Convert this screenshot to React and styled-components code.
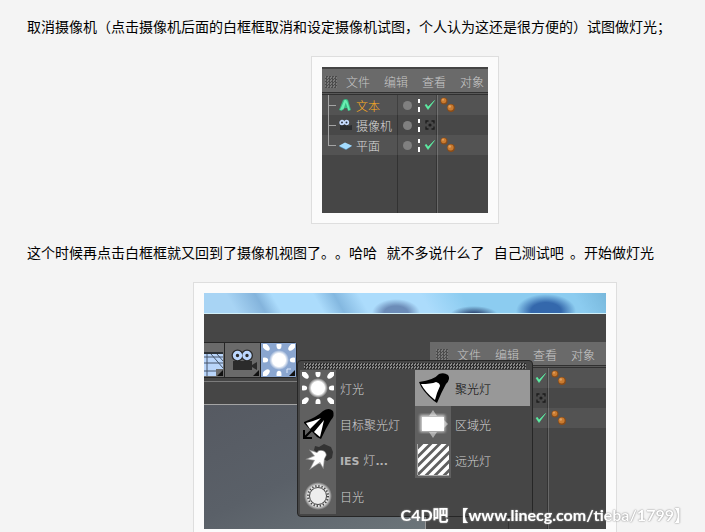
import React, { useId, useState } from "react";
import styled, { createGlobalStyle } from "styled-components";

const GlobalStyle = createGlobalStyle`
  html {
    scrollbar-width: none;
  }

  body {
    margin: 0;
    background: #f4f4f4;
    color: #000;
    font-family: "Noto Sans CJK SC", sans-serif;
    font-size: 14px;
    text-spacing-trim: space-all;
  }

  *, *::before, *::after {
    box-sizing: border-box;
  }

  button {
    margin: 0;
    padding: 0;
    border: 0;
    background: none;
    color: inherit;
    font: inherit;
  }

  svg {
    display: block;
    flex: none;
  }
`;

const Article = styled.article`
  display: flex;
  flex-direction: column;
  gap: 17px;
  padding: 15px 0 0 27px;
`;

const Paragraph = styled.p`
  margin: 0;
  padding-bottom: 2px;
  line-height: 22px;
`;

const Figure = styled.figure`
  display: flex;
  justify-content: center;
  margin: 0;
  padding-left: 78px;
`;

const Frame = styled.div`
  padding: 10px;
  border: 1px solid #dedede;
  background: #fbfbfb;
`;

const Screen = styled.div`
  position: relative;
  display: flex;
  flex-direction: column;
  width: ${(props) => props.$width}px;
  max-width: 100%;
  height: ${(props) => props.$height}px;
  overflow: hidden;
  background: #464646;
  color: #c8c8c8;
  font-size: 12px;
  font-weight: 300;
  line-height: 16px;
`;

/* Object manager */

const Manager = styled.section`
  position: relative;
  display: flex;
  flex: 1;
  flex-direction: column;
  min-width: 0;
  background: linear-gradient(
    90deg,
    transparent ${(props) => props.$nameWidth}px,
    #323232 ${(props) => props.$nameWidth}px,
    #323232 ${(props) => props.$nameWidth + 1}px,
    transparent ${(props) => props.$nameWidth + 1}px,
    transparent ${(props) => props.$nameWidth + 39}px,
    #343434 ${(props) => props.$nameWidth + 39}px,
    #343434 ${(props) => props.$nameWidth + 40}px,
    #686868 ${(props) => props.$nameWidth + 40}px,
    #686868 ${(props) => props.$nameWidth + 41}px,
    transparent ${(props) => props.$nameWidth + 41}px
  );
`;

const MenuBar = styled.nav`
  display: flex;
  flex: none;
  align-items: center;
  gap: 14px;
  height: 26px;
  padding: 3px 0 2px ${(props) => props.$inset}px;
  border-bottom: 1px solid #303030;
  background: linear-gradient(#6a6a6a 23px, #303030 23px, #303030 24px, #585858 24px);
  white-space: nowrap;
`;

const Grip = styled.span`
  flex: none;
  width: 12px;
  height: 12px;
  margin-right: -5px;
  background: repeating-conic-gradient(#4c4c4c 0 25%, #7a7a7a 0 50%) 0 0 / 3px 3px;
`;

const MenuButton = styled.button`
  flex: none;
`;

const ObjectList = styled.ul`
  margin: 0;
  padding: 0;
  list-style: none;
`;

const ObjectRow = styled.li`
  display: flex;
  height: 20px;
  background: ${(props) =>
    props.$shaded ? "rgba(255, 255, 255, 0.07)" : "rgba(255, 255, 255, 0.01)"};
`;

const NameCell = styled.div`
  display: flex;
  flex: none;
  align-items: center;
  width: ${(props) => props.$width}px;
  padding-left: ${(props) => props.$inset}px;
`;

const ObjectName = styled.span`
  padding: 2px 0 0 4px;
  color: ${(props) => (props.$selected ? "#ffae20" : "#dcdcdc")};
  white-space: nowrap;
`;

const StateCell = styled.div`
  display: flex;
  flex: none;
  align-items: center;
  width: 41px;
  padding-left: 5px;
`;

const Dot = styled.span`
  width: 9px;
  height: 9px;
  border-radius: 50%;
  background: #808080;
`;

const Dashes = styled.span`
  width: 2px;
  height: 13px;
  margin: 0 4px 0 6px;
  background: linear-gradient(#fff 4px, transparent 4px, transparent 8px, #fff 8px);
`;

const Toggle = styled.label`
  display: block;
  width: 12px;
  height: 12px;
`;

const HiddenCheck = styled.input`
  position: absolute;
  width: 12px;
  height: 12px;
  margin: 0;
  opacity: 0;
`;

/* Main window */

const TopEdge = styled.div`
  display: flex;
  flex: 1;
  border-top: 2px solid #444;
`;

const Sky = styled.div`
  flex: none;
  height: 21px;
  border-bottom: 1px solid #d2f0f8;
  background:
    radial-gradient(ellipse 24px 14px at 192px 20px, #6c8cb8 50%, transparent),
    radial-gradient(ellipse 24px 9px at 270px 22px, #34507c 25%, transparent),
    radial-gradient(ellipse 30px 17px at 342px 18px, #3468ac 50%, transparent),
    linear-gradient(
      60deg,
      #a8d4f4 0 8%,
      #84b4dc 15%,
      #acdcfc 19% 29%,
      #84b8e0 34%,
      #acdcfc 40% 55%,
      #8cccf0 65% 92%,
      #78b8dc
    );
`;

const Workspace = styled.div`
  display: flex;
  flex: 1;
  padding-top: 28px;
`;

const Stage = styled.div`
  display: flex;
  flex: none;
  flex-direction: column;
  width: 226px;
`;

const Toolbar = styled.div`
  display: flex;
  gap: 1px;
  width: 93px;
  height: 36px;
  padding: 1px 1px 1px 0;
  border-radius: 0 4px 4px 0;
  background: #262626;
`;

const ToolButton = styled.button`
  width: ${(props) => props.$width}px;
  height: 34px;
  overflow: hidden;
  background: ${(props) => (props.$active ? "#8aa6d0" : "#6a6a6a")};
`;

const SubBar = styled.div`
  height: 23px;
  margin-top: 3px;
  border-top: 1px solid #7c7c7c;
`;

const Viewport = styled.div`
  flex: 1;
  margin-right: 4px;
  border-top: 1px solid #a4a4a4;
  border-right: 1px solid #9a9a9a;
  background: linear-gradient(155deg, #565a62 0%, #5a6068 50%, #6c757a 100%);
`;

const Popup = styled.div`
  position: absolute;
  top: 67px;
  left: 93px;
  width: 236px;
  padding: 2px;
  border: 1px solid #262626;
  border-radius: 4px;
  background: #464646;
`;

const TearOff = styled.div`
  height: 6px;
  margin: 0 4px 1px;
  background: repeating-conic-gradient(#2c2c2c 0 25%, #888 0 50%) 0 0 / 3px 3px;
`;

const LightGrid = styled.div`
  display: grid;
  grid-template-rows: repeat(4, 36px);
  grid-auto-columns: 1fr;
  grid-auto-flow: column;
`;

const LightButton = styled.button`
  display: flex;
  align-items: center;
  gap: 4px;
  background: ${(props) => (props.$active ? "#989898" : "none")};
  color: ${(props) => (props.$active ? "#000" : "#d2d2d2")};
  text-align: left;
  white-space: nowrap;

  svg {
    background: ${(props) => (props.$active ? "#989898" : "#606060")};
  }
`;

const LightName = styled.span`
  padding-top: 2px;
`;

const Latin = styled.b`
  color: #b4b4b4;
  font-family: "DejaVu Sans", sans-serif;
  font-size: 11px;
  font-weight: 700;
`;

const Watermark = styled.span`
  position: fixed;
  right: 15px;
  bottom: 5px;
  color: #fff;
  font-family: Lato, "Noto Sans CJK SC", sans-serif;
  font-size: 16px;
  font-weight: 700;
  line-height: 24px;
  text-shadow: 0 0 1px #888, 0 0 2px #999;
  white-space: nowrap;
`;

const TextIcon = () => (
  <svg width="13" height="14" viewBox="0 0 13 14">
    <path d="M0 12 4 2q3-2 5 0l3 10-3 1-1-3-4 .5-1 2.500z" fill="#39b983" />
    <path d="M1 12 5.500 2h2l-3 9.500zM8 2.500l3 9.500-1.500.5L6.500 4z" fill="#69efb2" />
  </svg>
);

const CameraIcon = () => (
  <svg width="13" height="12" viewBox="0 0 13 12">
    <path d="M1 6h8v1l4-1v5H1z" fill="#2b2d30" />
    <g fill="#28303c" stroke="#c6dcff" strokeWidth="1.700">
      <circle cx="3" cy="3.500" r="1.800" />
      <circle cx="7.500" cy="3.500" r="1.800" />
    </g>
  </svg>
);

const PlaneIcon = () => (
  <svg width="13" height="12" viewBox="0 0 13 12">
    <path d="M0 7.500 6 4l7 3-6 4z" fill="#5b93bd" />
    <path d="M0 6.800 6 3.500l7 3.200-6 3.500z" fill="#a4dcff" />
  </svg>
);

const CheckIcon = () => (
  <svg width="12" height="12" viewBox="0 0 12 12">
    <path d="M1 6 2.500 5.500 4 8 10.500 1.500 4 10.500z" fill="#5cf0a4" stroke="#5cf0a4" strokeWidth=".6" />
  </svg>
);

const TargetIcon = () => (
  <svg width="12" height="12" viewBox="0 0 12 12">
    <path
      d="M2 4.500V2h2.500M7.500 2H10v2.500M10 7.500V10H7.500M4.500 10H2V7.500"
      fill="none"
      stroke="#1c1c1c"
      strokeWidth="1.300"
    />
    <circle cx="6" cy="6" r="1.600" fill="#1c1c1c" />
  </svg>
);

const TagIcon = () => (
  <svg width="16" height="20" viewBox="0 0 16 20">
    <g fill="#8a4c18">
      <circle cx="5" cy="6" r="3.500" />
      <circle cx="12" cy="13" r="3.900" />
    </g>
    <g fill="#c97b30">
      <circle cx="4.700" cy="5.600" r="2.600" />
      <circle cx="11.600" cy="12.500" r="3" />
    </g>
    <g fill="#e0a060">
      <circle cx="4" cy="4.800" r="1" />
      <circle cx="10.800" cy="11.500" r="1.200" />
    </g>
  </svg>
);

const OmniIcon = () => {
  const id = useId();
  return (
    <svg width="36" height="36" viewBox="0 0 36 36">
      <defs>
        <radialGradient id={id}>
          <stop offset="0.650" stopColor="#fff" />
          <stop offset="1" stopColor="#fff" stopOpacity="0" />
        </radialGradient>
        <clipPath id={`${id}c`}>
          <path d="M2 2h32v32H2z" />
        </clipPath>
      </defs>
      <circle cx="18" cy="18" r="10" fill={`url(#${id})`} />
      <g clipPath={`url(#${id}c)`} fill="#fff">
        {[0, 90, 180, 270].map((angle) => (
          <g key={angle} transform={`rotate(${angle} 18 18)`}>
            <ellipse cx="18" cy="3.500" rx="2.500" ry="3.700" />
            <ellipse cx="18" cy="-0.500" rx="2.600" ry="4.600" transform="rotate(45 18 18)" />
          </g>
        ))}
      </g>
    </svg>
  );
};

const SpotIcon = () => (
  <svg width="36" height="36" viewBox="0 0 36 36">
    <path
      d="M4 12Q19 10 24 4Q29 2 33 5Q36 9 31 14Q26 23 22 33L19 31Q7 21 4 12z"
      fill="#000"
    />
    <path d="M6 14Q16 14 21 12Q25 13 25 16Q22 22 20 30Q10 22 6 14z" fill="#fff" />
  </svg>
);

const TargetSpotIcon = () => (
  <svg width="36" height="36" viewBox="0 0 36 36">
    <path
      d="M4 16Q17 11 23 5Q29 1 33 5Q35 10 31 14Q26 22 21 33L17 31 4 17z"
      fill="#000"
    />
    <path d="M6 17Q14 15 21 12L10 23zM24 14Q22 23 20 31L14 26z" fill="#fff" />
    <path d="M23 13 5 31M4 24v8h8" fill="none" stroke="#000" strokeWidth="2" />
  </svg>
);

const IesIcon = () => (
  <svg width="36" height="36" viewBox="0 0 36 36">
    <path d="M14 8 15 4l4 1 5-3 7 3 2 5-1 6-5 3-7-4z" fill="#333" />
    <path
      d="M19 9q6-1 7 4l-2 4-1 8-3-5-9 6 4-8-7-1 7-3-4-5 6 2z"
      fill="#fff"
      stroke="#fff"
      strokeOpacity="0.400"
      strokeWidth="1.500"
    />
  </svg>
);

const SunIcon = () => {
  const id = useId();
  return (
    <svg width="36" height="36" viewBox="0 0 36 36">
      <radialGradient id={id}>
        <stop offset="0.750" stopColor="#e4e4e4" />
        <stop offset="1" stopColor="#e4e4e4" stopOpacity="0" />
      </radialGradient>
      <circle cx="18" cy="18" r="14" fill={`url(#${id})`} />
      <circle
        cx="18"
        cy="18"
        r="10"
        fill="none"
        stroke="#444"
        strokeWidth="2"
        strokeDasharray="1.300 1.844"
      />
      <circle cx="18" cy="18" r="8.500" fill="#ededed" stroke="#444" />
    </svg>
  );
};

const AreaIcon = () => {
  const id = useId();
  return (
    <svg width="36" height="36" viewBox="0 0 36 36">
      <filter id={id}>
        <feGaussianBlur stdDeviation="1.500" />
      </filter>
      <path d="m18 4 4 6h-8zM18 32l-4-6h8zM33 18l-4-4v8z" fill="#aaa" />
      <path d="M5 9h25v17H5z" fill="#fff" filter={`url(#${id})`} opacity="0.700" />
      <path d="M7 11h22v14H7z" fill="#fff" />
    </svg>
  );
};

const InfiniteIcon = () => {
  const id = useId();
  return (
    <svg width="36" height="36" viewBox="0 0 36 36">
      <clipPath id={id}>
        <path d="M3 2h31v31H3z" />
      </clipPath>
      <path
        clipPath={`url(#${id})`}
        d="M-2 15 15-2M-2 24 24-2M-2 33 33-2M2 38 38 2M11 38 38 11M20 38 38 20M29 38 38 29"
        stroke="#fff"
        strokeWidth="3.600"
      />
      <path d="M2.500 2v31M3 33.500h31" stroke="#aaa" />
    </svg>
  );
};

const Corner = ({ x }) => <path d={`M${x} 27v6h-6z`} fill="#111" />;

const FloorTool = () => (
  <svg width="20" height="34" viewBox="0 0 20 34">
    <path d="M0 9h19v24H0z" fill="#b9d5fa" />
    <path d="M0 9h19v2H0z" fill="#2b3035" />
    <path
      d="M0 14h19M0 20h19M0 28h13M3 11v22M7 11l12 14M13 11l6 7"
      fill="none"
      stroke="#46556a"
    />
    <path d="M12 26h7v7h-7z" fill="#6a6a6a" />
    <Corner x={19} />
  </svg>
);

const CameraTool = () => (
  <svg width="35" height="34" viewBox="0 0 35 34">
    <path d="M8 18h19v4l5-3v8l-5-3v3H8z" fill="#2b2b2b" />
    <g fill="#2b2b2b" stroke="#2b2b2b" strokeWidth="6">
      <circle cx="12.500" cy="12.500" r="3" />
      <circle cx="22" cy="12.500" r="3" />
    </g>
    <g fill="#2b2b2b" stroke="#bcd8ff" strokeWidth="3">
      <circle cx="12.500" cy="12.500" r="3.200" />
      <circle cx="22" cy="12.500" r="3.200" />
    </g>
    <Corner x={34} />
  </svg>
);

const LightTool = () => (
  <svg width="35" height="34" viewBox="0 1 35 34">
    <OmniIcon />
    <path d="M25 26h9v8h-9z" fill="#8aa6d0" />
    <path d="M26 31v-4h4" fill="none" stroke="#dce8fa" />
    <path d="M34 28v6h-6z" fill="#111" />
  </svg>
);

const objects = [
  { name: "文本", icon: TextIcon, selected: true, enabled: true },
  { name: "摄像机", icon: CameraIcon, camera: true },
  { name: "平面", icon: PlaneIcon, enabled: true },
];

const lights = [
  { name: "灯光", icon: OmniIcon },
  { name: "目标聚光灯", icon: TargetSpotIcon },
  { name: "灯", prefix: "IES ", suffix: "...", icon: IesIcon },
  { name: "日光", icon: SunIcon },
  { name: "聚光灯", icon: SpotIcon },
  { name: "区域光", icon: AreaIcon },
  { name: "远光灯", icon: InfiniteIcon },
];

const Branch = ({ last }) => (
  <svg width="11" height="20" viewBox="0 0 11 20">
    <path d={`M.5 0v${last ? 10.5 : 20}M0 10.500h8`} fill="none" stroke="#a4a4a4" />
  </svg>
);

// covered: the name column is under an open menu, so it stays empty
const ObjectManager = ({ inset = 0, covered = false }) => {
  const [items, setItems] = useState(objects);

  const handleToggle = (name) => {
    setItems(
      items.map((item) =>
        item.name === name ? { ...item, enabled: !item.enabled } : item
      )
    );
  };

  return (
    <Manager $nameWidth={75 + inset}>
      <MenuBar $inset={3 + inset}>
        <Grip />
        {["文件", "编辑", "查看", "对象"].map((label) => (
          <MenuButton key={label} type="button">
            {label}
          </MenuButton>
        ))}
      </MenuBar>
      <ObjectList>
        {items.map((item, index) => (
          <ObjectRow key={item.name} $shaded={index % 2 === 0}>
            <NameCell $width={76 + inset} $inset={6 + inset}>
              {!covered && (
                <>
                  <Branch last={index === items.length - 1} />
                  <item.icon />
                  <ObjectName $selected={item.selected}>{item.name}</ObjectName>
                </>
              )}
            </NameCell>
            <StateCell>
              <Dot />
              <Dashes />
              <Toggle>
                <HiddenCheck
                  type="checkbox"
                  aria-label={item.name}
                  checked={Boolean(item.enabled)}
                  onChange={() => handleToggle(item.name)}
                />
                {item.camera && <TargetIcon />}
                {item.enabled && !item.camera && <CheckIcon />}
              </Toggle>
            </StateCell>
            {!item.camera && <TagIcon />}
          </ObjectRow>
        ))}
      </ObjectList>
    </Manager>
  );
};

const LightMenu = () => {
  const [active, setActive] = useState("聚光灯");

  return (
    <Popup>
      <TearOff />
      <LightGrid>
        {lights.map((light) => (
          <LightButton
            key={light.name}
            type="button"
            $active={light.name === active}
            onClick={() => setActive(light.name)}
          >
            <light.icon />
            <LightName>
              {light.prefix && <Latin>{light.prefix}</Latin>}
              {light.name}
              {light.suffix && <Latin>{light.suffix}</Latin>}
            </LightName>
          </LightButton>
        ))}
      </LightGrid>
    </Popup>
  );
};

const App = () => {
  return (
    <>
      <GlobalStyle />
      <Article>
        <Paragraph>
          取消摄像机（点击摄像机后面的白框框取消和设定摄像机试图，个人认为这还是很方便的）试图做灯光；
        </Paragraph>
        <Figure>
          <Frame>
            <Screen $width={166} $height={146}>
              <TopEdge>
                <ObjectManager />
              </TopEdge>
            </Screen>
          </Frame>
        </Figure>
        <Paragraph>
          这个时候再点击白框框就又回到了摄像机视图了。。哈哈&nbsp;&nbsp;&nbsp;就不多说什么了&nbsp;&nbsp;&nbsp;自己测试吧&nbsp;&nbsp;。开始做灯光
        </Paragraph>
        <Figure>
          <Frame>
            <Screen $width={402} $height={236}>
              <Sky />
              <Workspace>
                <Stage>
                  <Toolbar>
                    <ToolButton type="button" aria-label="地面" $width={20}>
                      <FloorTool />
                    </ToolButton>
                    <ToolButton type="button" aria-label="摄像机" $width={35}>
                      <CameraTool />
                    </ToolButton>
                    <ToolButton type="button" aria-label="灯光" $width={35} $active>
                      <LightTool />
                    </ToolButton>
                  </Toolbar>
                  <SubBar />
                  <Viewport />
                </Stage>
                <ObjectManager inset={3} covered />
              </Workspace>
              <LightMenu />
            </Screen>
          </Frame>
        </Figure>
      </Article>
      <Watermark>C4D吧 【www.linecg.com/tieba/1799】</Watermark>
    </>
  );
};

export default App;
